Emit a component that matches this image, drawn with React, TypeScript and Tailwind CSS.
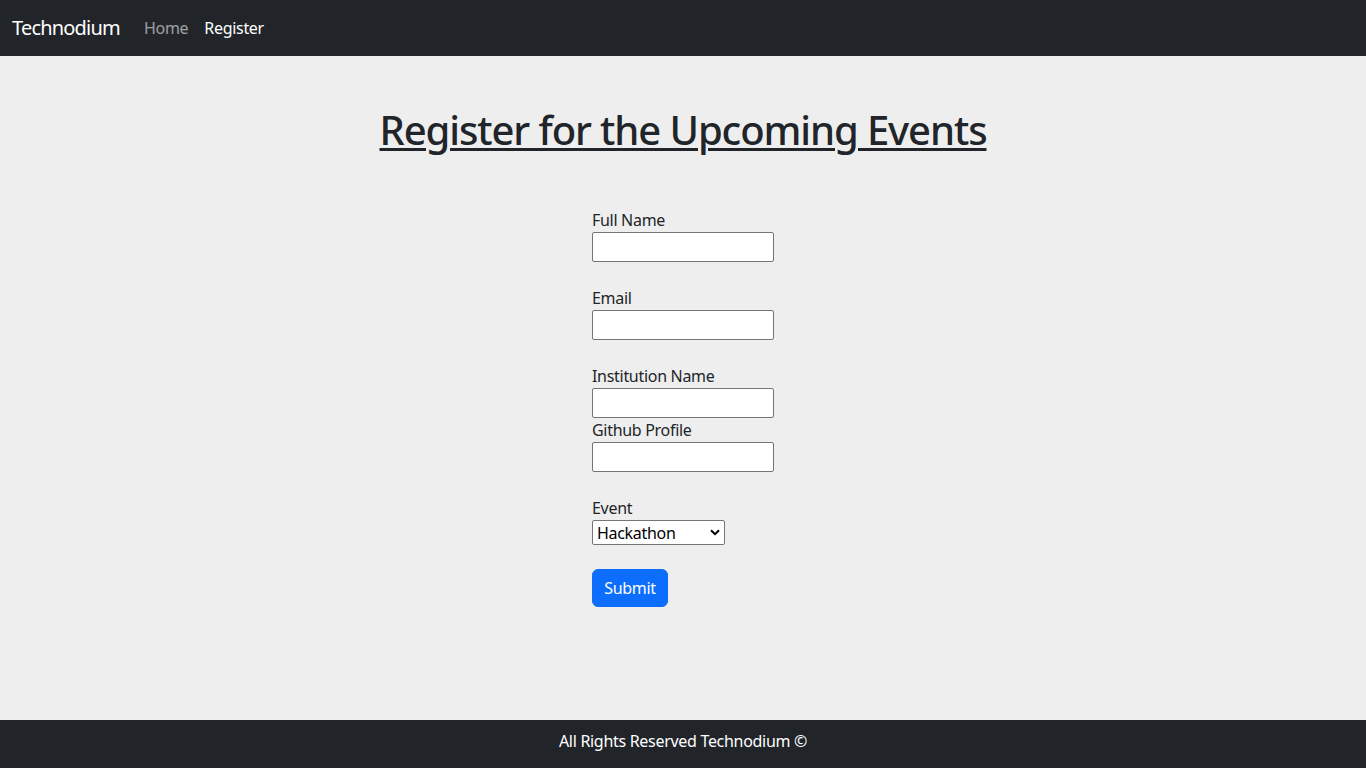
import { useState } from 'react';

const font = "font-['Segoe_UI','Noto_Sans','Liberation_Sans',sans-serif]";

const TextField = ({ label, type = 'text' }: { label: string; type?: string }) => (
  <>
    <label className="block leading-6 tracking-[-0.3px]">{label}</label>
    <input
      type={type}
      className="block h-[30px] w-[182px] rounded-[2px] border border-[#767676] bg-white px-[2px] outline-none"
    />
  </>
);

export default function App() {
  const [event, setEvent] = useState('Hackathon');

  return (
    <div className={`${font} flex min-h-screen flex-col bg-[#eeeeee] text-base text-[#212529]`}>
      <nav className="flex h-14 shrink-0 items-center bg-[#212529] px-3">
        <span className="mr-4 text-xl leading-[30px] tracking-[-0.8px] text-white">Technodium</span>
        <a className="px-2 tracking-[-0.3px] text-white/55">Home</a>
        <a className="px-2 tracking-[-0.3px] text-white">Register</a>
      </nav>

      <main className="flex flex-1 flex-col items-center">
        <h1 className="mt-[50px] text-[40px] font-medium leading-[1.2] tracking-[-1.1px] underline decoration-[3px] underline-offset-[3px]">
          Register for the Upcoming Events
        </h1>

        <form className="mt-[54px] w-[182px]" onSubmit={(e) => e.preventDefault()}>
          <TextField label="Full Name" />
          <div className="h-6" />
          <TextField label="Email" type="email" />
          <div className="h-6" />
          <TextField label="Institution Name" />
          <TextField label="Github Profile" />
          <div className="h-6" />
          <label className="block leading-6 tracking-[-0.3px]">Event</label>
          <div className="relative w-[133px]">
            <select
              value={event}
              onChange={(e) => setEvent(e.target.value)}
              className="block h-[25px] w-[133px] appearance-none rounded-[2px] border border-[#767676] bg-white pl-1 text-base leading-5 tracking-[-0.3px] text-black"
            >
              <option>Hackathon</option>
              <option>Coding Contest</option>
              <option>Quiz</option>
            </select>
            <svg
              className="pointer-events-none absolute right-[5px] top-[9px] h-[7px] w-[10px]"
              viewBox="0 0 10 7"
              fill="none"
            >
              <path d="M1 1.2 5 5.2 9 1.2" stroke="#000" strokeWidth="2" />
            </svg>
          </div>
          <button
            type="submit"
            className="mt-6 h-[38px] w-[76px] rounded-md border border-[#0d6efd] bg-[#0d6efd] leading-6 tracking-[-0.3px] text-white"
          >
            Submit
          </button>
        </form>
      </main>

      <footer className="flex h-12 shrink-0 items-center justify-center bg-[#212529] pb-[6px] tracking-[-0.3px] text-white">
        All Rights Reserved Technodium ©
      </footer>
    </div>
  );
}
